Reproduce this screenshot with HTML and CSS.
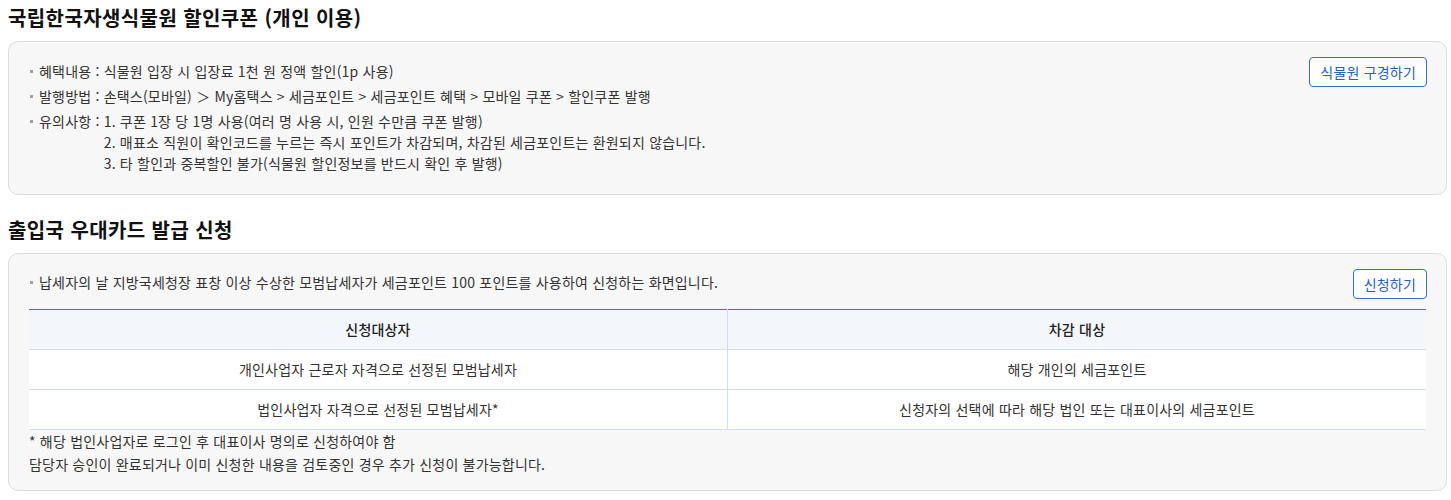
FILE: index.html
```html
<!DOCTYPE html>
<html lang="ko">

<head>
    <meta charset="UTF-8">
    <meta name="viewport" content="width=device-width, initial-scale=1.0">
    <title>세금포인트 혜택</title>
    <link rel="stylesheet" href="styles.css">
</head>

<body>
    <div id="page">
        <h3 class="sec-title">국립한국자생식물원 할인쿠폰 (개인 이용)</h3>
        <div class="box">
            <div class="box-row">
                <ul class="dot-list">
                    <li>혜택내용 : 식물원 입장 시 입장료 1천 원 정액 할인(1p 사용)</li>
                    <li>발행방법 : 손택스(모바일) ＞ My홈택스 &gt; 세금포인트 &gt; 세금포인트 혜택 &gt; 모바일 쿠폰 &gt; 할인쿠폰 발행</li>
                    <li class="hang">
                        <span>유의사항 :&nbsp;</span>
                        <div>
                            <p>1. 쿠폰 1장 당 1명 사용(여러 명 사용 시, 인원 수만큼 쿠폰 발행)</p>
                            <p>2. 매표소 직원이 확인코드를 누르는 즉시 포인트가 차감되며, 차감된 세금포인트는 환원되지 않습니다.</p>
                            <p>3. 타 할인과 중복할인 불가(식물원 할인정보를 반드시 확인 후 발행)</p>
                        </div>
                    </li>
                </ul>
                <button class="btn-line">식물원 구경하기</button>
            </div>
        </div>

        <h3 class="sec-title second">출입국 우대카드 발급 신청</h3>
        <div class="box box-table">
            <div class="box-row">
                <ul class="dot-list">
                    <li>납세자의 날 지방국세청장 표창 이상 수상한 모범납세자가 세금포인트 100 포인트를 사용하여 신청하는 화면입니다.</li>
                </ul>
                <button class="btn-line">신청하기</button>
            </div>
            <table class="tbl">
                <thead>
                    <tr>
                        <th>신청대상자</th>
                        <th>차감 대상</th>
                    </tr>
                </thead>
                <tbody>
                    <tr>
                        <td>개인사업자 근로자 자격으로 선정된 모범납세자</td>
                        <td>해당 개인의 세금포인트</td>
                    </tr>
                    <tr>
                        <td>법인사업자 자격으로 선정된 모범납세자*</td>
                        <td>신청자의 선택에 따라 해당 법인 또는 대표이사의 세금포인트</td>
                    </tr>
                </tbody>
            </table>
            <div class="notes">
                <p>* 해당 법인사업자로 로그인 후 대표이사 명의로 신청하여야 함</p>
                <p>담당자 승인이 완료되거나 이미 신청한 내용을 검토중인 경우 추가 신청이 불가능합니다.</p>
            </div>
        </div>
    </div>
</body>

</html>
```

FILE: styles.css
```css
* {
    box-sizing: border-box;
}

body {
    margin: 0;
    background-color: #fff;
    color: #333;
    font-family: "Noto Sans CJK KR", "Noto Sans", sans-serif;
    font-size: 14px;
    letter-spacing: 0.2px;
}

p {
    margin: 0;
}

#page {
    padding: 4px 4px 0 8px;
}

.sec-title {
    margin: 0 0 9px;
    font-size: 20px;
    line-height: 28px;
    font-weight: bold;
    color: #111;
    letter-spacing: 0.4px;
}

.sec-title.second {
    margin-top: 21px;
}

.box {
    background-color: #f7f7f7;
    border: 1px solid #dcdcdc;
    border-radius: 10px;
    padding: 15px 20px 20px 20px;
}

.box-row {
    display: flex;
    align-items: flex-start;
}

.dot-list {
    flex: 1;
    list-style: none;
    margin: 0;
    padding: 3.5px 0 0;
    line-height: 21px;
}

.dot-list>li {
    position: relative;
    padding-left: 10px;
    margin-bottom: 4px;
}

.dot-list>li:last-child {
    margin-bottom: 0;
}

.dot-list>li::before {
    content: "";
    position: absolute;
    left: 1px;
    top: 9px;
    width: 3px;
    height: 3px;
    background-color: #a0a0a0;
}

.dot-list>li.hang {
    display: flex;
}

.dot-list>li.hang>span {
    white-space: pre;
}

.btn-line {
    height: 30px;
    padding: 0 10px;
    background-color: #fff;
    border: 1px solid #2f6fe6;
    border-radius: 4px;
    color: #2160d4;
    font-family: inherit;
    font-size: 14px;
    letter-spacing: 0.2px;
    cursor: pointer;
    margin-right: -1px;
}

.box-table {
    padding-bottom: 14px;
}

.tbl {
    width: 100%;
    margin-top: 10px;
    border-collapse: collapse;
    border-top: 1px solid #4a72b0;
    table-layout: fixed;
}

.tbl th,
.tbl td {
    height: 40px;
    text-align: center;
    border-bottom: 1px solid #d3dfec;
    padding: 0 10px;
}

.tbl th+th,
.tbl td+td {
    border-left: 1px solid #cfdff2;
}

.tbl th {
    background-color: #f3f6fa;
    font-weight: 500;
    color: #222;
}

.tbl td {
    background-color: #fff;
}

.notes {
    line-height: 23px;
}
```
